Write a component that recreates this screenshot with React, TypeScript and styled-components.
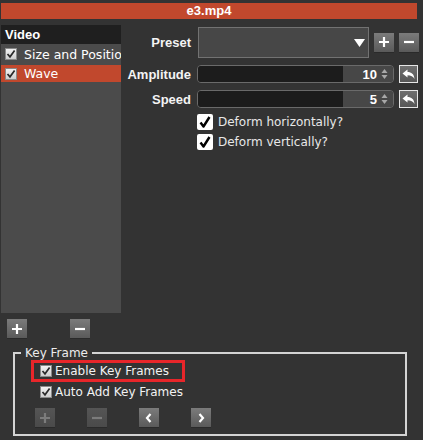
import React from 'react';
import styled, { createGlobalStyle } from 'styled-components';

const GlobalStyle = createGlobalStyle`
  html, body {
    margin: 0;
    padding: 0;
    background: #333333;
  }
  body {
    font-family: "DejaVu Sans", "Liberation Sans", sans-serif;
    font-size: 12px;
    color: #ececec;
  }
`;

const Window = styled.div`
  width: 423px;
  height: 440px;
  background: #333333;
  padding-top: 3px;
  box-sizing: border-box;
  overflow: hidden;
`;

const TitleBar = styled.div`
  margin: 0 6px 0 1px;
  height: 16px;
  line-height: 16px;
  background: #c1482d;
  color: #fff;
  font-family: "Liberation Sans", Arial, sans-serif;
  font-weight: bold;
  font-size: 13px;
  text-align: center;
`;

const Main = styled.div`
  display: flex;
  margin-top: 6px;
`;

const LeftColumn = styled.div`
  width: 120px;
  margin-left: 1px;
  display: flex;
  flex-direction: column;
`;

const ListPanel = styled.div`
  height: 288px;
  background: #4b4b4b;
  overflow: hidden;
`;

const ListHeader = styled.div`
  height: 19px;
  line-height: 19px;
  background: #1f1f1f;
  font-family: "Liberation Sans", Arial, sans-serif;
  font-size: 13px;
  font-weight: bold;
  color: #fff;
  padding-left: 4px;
`;

const ListRow = styled.div<{ $selected?: boolean }>`
  height: ${(p) => (p.$selected ? 17 : 20)}px;
  margin-top: ${(p) => (p.$selected ? 1 : 0)}px;
  display: flex;
  align-items: center;
  gap: 7px;
  padding-left: 4px;
  white-space: nowrap;
  font-size: 12.5px;
  color: #fff;
  background: ${(p) => (p.$selected ? '#c1482d' : 'transparent')};
`;

const ListButtons = styled.div`
  display: flex;
  gap: 43px;
  margin: 6px 0 0 6px;
`;

const SquareButton = styled.div<{ $disabled?: boolean }>`
  width: 20px;
  height: 20px;
  display: flex;
  align-items: center;
  justify-content: center;
  box-sizing: border-box;
  background: ${(p) =>
    p.$disabled
      ? 'linear-gradient(#555555, #4a4a4a)'
      : 'linear-gradient(#7b7b7b, #5a5a5a)'};
  border-bottom: 1px solid #2a2a2a;
  color: ${(p) => (p.$disabled ? '#7a7a7a' : '#ffffff')};
`;

const RightColumn = styled.div`
  flex: 1;
  padding-top: 2px;
  display: flex;
  flex-direction: column;
`;

const FormRow = styled.div<{ $top: number; $height: number }>`
  display: flex;
  align-items: center;
  margin-top: ${(p) => p.$top}px;
  height: ${(p) => p.$height}px;
`;

const Label = styled.div`
  width: 70px;
  margin-right: 6px;
  text-align: right;
  font-family: "Liberation Sans", Arial, sans-serif;
  font-size: 13px;
  font-weight: bold;
  color: #f4f4f4;
  white-space: nowrap;
`;

const Combo = styled.div`
  width: 171px;
  height: 31px;
  margin-left: 1px;
  box-sizing: border-box;
  border: 1px solid #727272;
  background: #474747;
  display: flex;
  align-items: center;
  justify-content: flex-end;
  padding-right: 3px;
`;

const ComboButtons = styled.div`
  display: flex;
  gap: 5px;
  margin-left: 5px;
`;

const NumberField = styled.div`
  width: 197px;
  height: 18px;
  box-sizing: border-box;
  border: 1px solid #6a6a6a;
  border-radius: 4px;
  overflow: hidden;
  display: flex;
`;

const Track = styled.div`
  flex: 1;
  background: #1c1c1c;
`;

const ValueBox = styled.div`
  width: 50px;
  background: #474747;
  display: flex;
  align-items: center;
  justify-content: flex-end;
  gap: 4px;
  padding-right: 5px;
  box-sizing: border-box;
  font-family: "Liberation Sans", Arial, sans-serif;
  font-size: 13px;
  font-weight: bold;
  color: #fff;
`;

const ResetButton = styled.div`
  width: 19px;
  height: 18px;
  margin-left: 5px;
  box-sizing: border-box;
  border: 1px solid #e6e6e6;
  background: linear-gradient(#6f6f6f, #575757);
  display: flex;
  align-items: center;
  justify-content: center;
`;

const CheckRow = styled.div<{ $top: number }>`
  display: flex;
  align-items: center;
  gap: 5px;
  margin: ${(p) => p.$top}px 0 0 76px;
  height: 16px;
  color: #e8e8e8;
`;

const BigBox = styled.div`
  width: 16px;
  height: 16px;
  background: #fff;
  border-radius: 2px;
  display: flex;
  align-items: center;
  justify-content: center;
`;

const SmallBox = styled.div`
  width: 12px;
  height: 12px;
  box-sizing: border-box;
  background: linear-gradient(#f2f2f2, #cfcfcf);
  border: 1px solid #8a8a8a;
  display: flex;
  align-items: center;
  justify-content: center;
  flex-shrink: 0;
`;

const Group = styled.fieldset`
  margin: 7px 0 0 13px;
  width: 394px;
  height: 90px;
  padding: 0;
  box-sizing: border-box;
  border: 2px solid #d4d4d4;
  min-width: 0;
`;

const Legend = styled.legend`
  margin-left: 6px;
  padding: 0 4px;
  line-height: 14px;
  font-size: 12px;
  color: #ececec;
`;

const Highlight = styled.div`
  margin-left: 16px;
  width: 154px;
  height: 22px;
  box-sizing: border-box;
  border: 3px solid #e8262a;
  display: flex;
  align-items: center;
  gap: 3px;
  padding-left: 6px;
  color: #f2f2f2;
`;

const KeyRow = styled.div`
  margin-left: 25px;
  height: 20px;
  display: flex;
  align-items: center;
  gap: 3px;
  color: #f2f2f2;
`;

const KeyButtons = styled.div`
  display: flex;
  gap: 32px;
  margin: 6px 0 0 20px;
`;

const SmallCheck = () => (
  <SmallBox>
    <svg width="10" height="10" viewBox="0 0 10 10">
      <path d="M1.5 5 L4 7.8 L8.6 1.6" fill="none" stroke="#2a2a2a" strokeWidth="1.7" />
    </svg>
  </SmallBox>
);

const BigCheck = () => (
  <BigBox>
    <svg width="14" height="14" viewBox="0 0 14 14">
      <path d="M2.5 7.5 L5.5 11.5 L11.5 2" fill="none" stroke="#000" strokeWidth="2.4" strokeLinejoin="round" />
    </svg>
  </BigBox>
);

const Plus = ({ color }: { color: string }) => (
  <svg width="12" height="12" viewBox="0 0 12 12">
    <path d="M6 1 V11 M1 6 H11" stroke={color} strokeWidth="2.2" />
  </svg>
);

const Minus = ({ color }: { color: string }) => (
  <svg width="12" height="12" viewBox="0 0 12 12">
    <path d="M1 6 H11" stroke={color} strokeWidth="2.2" />
  </svg>
);

const Chevron = ({ dir }: { dir: 'left' | 'right' }) => (
  <svg width="10" height="12" viewBox="0 0 10 12">
    <path
      d={dir === 'left' ? 'M6.5 2 L3 6 L6.5 10' : 'M3.5 2 L7 6 L3.5 10'}
      fill="none"
      stroke="#fff"
      strokeWidth="2.2"
    />
  </svg>
);

const Stepper = () => (
  <svg width="7" height="12" viewBox="0 0 7 12">
    <path d="M0.5 5 L3.5 1 L6.5 5 Z M0.5 7 L3.5 11 L6.5 7 Z" fill="#a8a8a8" />
  </svg>
);

const ResetIcon = () => (
  <svg width="13" height="11" viewBox="0 0 13 11">
    <path d="M0.5 4.5 L5.5 0.5 V3 C9.5 3 12 5 12.5 10 C11 7.5 9 6.3 5.5 6.3 V8.5 Z" fill="#fff" />
  </svg>
);

const ParamRow = ({ label, value }: { label: string; value: string }) => (
  <FormRow $top={7} $height={18}>
    <Label>{label}</Label>
    <NumberField>
      <Track />
      <ValueBox>
        {value}
        <Stepper />
      </ValueBox>
    </NumberField>
    <ResetButton>
      <ResetIcon />
    </ResetButton>
  </FormRow>
);

export default function App() {
  return (
    <Window>
      <GlobalStyle />
      <TitleBar>e3.mp4</TitleBar>
      <Main>
        <LeftColumn>
          <ListPanel>
            <ListHeader>Video</ListHeader>
            <ListRow>
              <SmallCheck />
              Size and Position
            </ListRow>
            <ListRow $selected>
              <SmallCheck />
              Wave
            </ListRow>
          </ListPanel>
          <ListButtons>
            <SquareButton>
              <Plus color="#fff" />
            </SquareButton>
            <SquareButton>
              <Minus color="#fff" />
            </SquareButton>
          </ListButtons>
        </LeftColumn>
        <RightColumn>
          <FormRow $top={0} $height={31}>
            <Label>Preset</Label>
            <Combo>
              <svg width="11" height="8" viewBox="0 0 11 8">
                <path d="M0 0 H11 L5.5 8 Z" fill="#fff" />
              </svg>
            </Combo>
            <ComboButtons>
              <SquareButton>
                <Plus color="#fff" />
              </SquareButton>
              <SquareButton>
                <Minus color="#fff" />
              </SquareButton>
            </ComboButtons>
          </FormRow>
          <ParamRow label="Amplitude" value="10" />
          <ParamRow label="Speed" value="5" />
          <CheckRow $top={6}>
            <BigCheck />
            Deform horizontally?
          </CheckRow>
          <CheckRow $top={4}>
            <BigCheck />
            Deform vertically?
          </CheckRow>
        </RightColumn>
      </Main>
      <Group>
        <Legend>Key Frame</Legend>
        <Highlight>
          <SmallCheck />
          Enable Key Frames
        </Highlight>
        <KeyRow>
          <SmallCheck />
          Auto Add Key Frames
        </KeyRow>
        <KeyButtons>
          <SquareButton $disabled>
            <Plus color="#7c7c7c" />
          </SquareButton>
          <SquareButton $disabled>
            <Minus color="#7c7c7c" />
          </SquareButton>
          <SquareButton>
            <Chevron dir="left" />
          </SquareButton>
          <SquareButton>
            <Chevron dir="right" />
          </SquareButton>
        </KeyButtons>
      </Group>
    </Window>
  );
}
